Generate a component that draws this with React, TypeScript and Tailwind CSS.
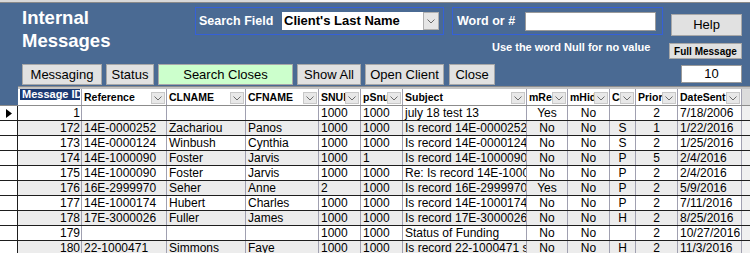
import React from 'react';

type Col = {
  label: string;
  w: string;
  align: 'left' | 'right' | 'center';
  arrow: boolean;
};

const COLS: Col[] = [
  { label: 'Message ID', w: 'w-[64px]', align: 'right', arrow: false },
  { label: 'Reference', w: 'w-[85px]', align: 'left', arrow: true },
  { label: 'CLNAME', w: 'w-[79px]', align: 'left', arrow: true },
  { label: 'CFNAME', w: 'w-[73px]', align: 'left', arrow: true },
  { label: 'SNUM', w: 'w-[42px]', align: 'left', arrow: true },
  { label: 'pSnum', w: 'w-[42px]', align: 'left', arrow: true },
  { label: 'Subject', w: 'w-[124px]', align: 'left', arrow: true },
  { label: 'mRead', w: 'w-[41px]', align: 'center', arrow: true },
  { label: 'mHidden', w: 'w-[42px]', align: 'center', arrow: true },
  { label: 'Cat', w: 'w-[26px]', align: 'center', arrow: true },
  { label: 'Priority', w: 'w-[42px]', align: 'center', arrow: true },
  { label: 'DateSent', w: 'w-[64px]', align: 'left', arrow: true },
];

const ROWS: string[][] = [
  ['1', '', '', '', '1000', '1000', 'july 18 test 13', 'Yes', 'No', '', '2', '7/18/2006'],
  ['172', '14E-0000252', 'Zachariou', 'Panos', '1000', '1000', 'Is record 14E-0000252', 'No', 'No', 'S', '1', '1/22/2016'],
  ['173', '14E-0000124', 'Winbush', 'Cynthia', '1000', '1000', 'Is record 14E-0000124', 'No', 'No', 'S', '2', '1/25/2016'],
  ['174', '14E-1000090', 'Foster', 'Jarvis', '1000', '1', 'Is record 14E-1000090', 'No', 'No', 'P', '5', '2/4/2016'],
  ['175', '14E-1000090', 'Foster', 'Jarvis', '1000', '1000', 'Re: Is record 14E-1000090', 'No', 'No', 'P', '2', '2/4/2016'],
  ['176', '16E-2999970', 'Seher', 'Anne', '2', '1000', 'Is record 16E-2999970', 'Yes', 'No', 'P', '2', '5/9/2016'],
  ['177', '14E-1000174', 'Hubert', 'Charles', '1000', '1000', 'Is record 14E-1000174', 'No', 'No', 'P', '2', '7/11/2016'],
  ['178', '17E-3000026', 'Fuller', 'James', '1000', '1000', 'Is record 17E-3000026', 'No', 'No', 'H', '2', '8/25/2016'],
  ['179', '', '', '', '1000', '1000', 'Status of Funding', 'No', 'No', '', '2', '10/27/2016'],
  ['180', '22-1000471', 'Simmons', 'Faye', '1000', '1000', 'Is record 22-1000471 status', 'No', 'No', 'H', '2', '11/3/2016'],
];

const alignClass = {
  left: 'justify-start pl-[2px]',
  right: 'justify-end pr-[1px]',
  center: 'justify-center',
};

function Chevron() {
  return (
    <svg width="8" height="5" viewBox="0 0 8 5">
      <polyline points="0.5,0.5 4,4 7.5,0.5" fill="none" stroke="#6b6b6b" strokeWidth="1" />
    </svg>
  );
}

function Btn({
  children,
  className = '',
  green = false,
}: {
  children: React.ReactNode;
  className?: string;
  green?: boolean;
}) {
  return (
    <div
      className={`flex h-[21px] items-center justify-center border border-[#a8a8a8] text-[13px] text-black ${green ? 'bg-[#ccffcc]' : 'bg-[#e1e1e1]'} ${className}`}
    >
      {children}
    </div>
  );
}

export default function App() {
  return (
    <div className="h-[253px] w-[750px] overflow-hidden bg-[#4a6a93] font-['Liberation_Sans',Arial,sans-serif]">
      {/* remnants of the tab strip */}
      <div className="flex h-[3px] border-b border-[#8a8a8a]">
        <div className="w-[300px] bg-[#d9d9d9]" />
        <div className="flex-1 bg-[#f7f7f7]" />
      </div>

      {/* header form */}
      <div className="flex h-[83px]">
        <div className="flex w-[669px] flex-col pl-[22px]">
          <div className="flex h-[61px]">
            <div className="w-[173px] pt-[3px] text-[18.5px] leading-[23px] font-bold text-white">
              Internal
              <br />
              Messages
            </div>
            <div className="flex flex-col">
              <div className="flex pt-[4px]">
                <div className="flex h-[28px] w-[249px] items-center justify-between border border-[#3560d8] pl-[3px] pr-[4px]">
                  <span className="text-[12.5px] font-bold text-white">Search Field</span>
                  <div className="flex h-[18px] w-[157px] items-center bg-white">
                    <span className="flex-1 pl-[2px] text-[13px] font-bold text-black">Client's Last Name</span>
                    <div className="flex h-full w-[16px] items-center justify-center border border-[#b0b0b0] bg-[#e6e6e6]">
                      <Chevron />
                    </div>
                  </div>
                </div>
                <div className="ml-[8px] flex h-[28px] w-[211px] items-center justify-between border border-[#3560d8] pl-[4px] pr-[6px]">
                  <span className="text-[12.5px] font-bold text-white">Word or #</span>
                  <div className="h-[19px] w-[131px] border border-[#9a9a9a] bg-white" />
                </div>
              </div>
              <p className="mt-[6px] pl-[297px] text-[11px] leading-[13px] font-bold whitespace-nowrap text-white">
                Use the word Null for no value
              </p>
            </div>
          </div>
          <div className="flex">
            <Btn className="w-[80px]">Messaging</Btn>
            <Btn className="ml-[4px] w-[48px]">Status</Btn>
            <Btn green className="ml-[4px] w-[135px]">
              Search Closes
            </Btn>
            <Btn className="ml-[4px] w-[64px]">Show All</Btn>
            <Btn className="ml-[4px] w-[79px]">Open Client</Btn>
            <Btn className="ml-[5px] w-[46px]">Close</Btn>
          </div>
        </div>
        <div className="flex flex-col">
          <Btn className="mt-[11px] ml-[2px] h-[22px] w-[71px]">Help</Btn>
          <div className="mt-[7px] flex h-[16px] w-[73px] items-center justify-center border border-[#a8a8a8] bg-[#e1e1e1] text-[10px] font-bold text-black">
            Full Message
          </div>
          <div className="mt-[6px] ml-[12px] flex h-[18px] w-[61px] items-center justify-center border border-[#9a9a9a] bg-white text-[13px] text-black">
            10
          </div>
        </div>
      </div>

      {/* datasheet */}
      <div className="flex h-[3px]">
        <div className="w-[18px]" />
        <div className="flex-1 border-t border-[#8c8c8c] bg-[#c4c4c4]" />
      </div>
      <div className="flex h-[17px] border-b border-[#8c8c8c]">
        <div className="w-[18px] shrink-0" />
        {COLS.map((c, i) => (
          <div
            key={c.label}
            className={`flex shrink-0 items-start overflow-hidden border-r border-[#a0a0b0] bg-white ${c.w}`}
          >
            {i === 0 ? (
              <span className="mr-[1px] ml-[2px] block h-[11px] flex-1 overflow-hidden bg-[#1b3a73] pl-[2px] text-[11px] leading-[11px] font-bold whitespace-nowrap text-white">
                {c.label}
              </span>
            ) : (
              <span className="min-w-0 flex-1 overflow-hidden pt-[2px] pl-[2px] text-[10.5px] leading-[13px] font-bold whitespace-nowrap text-black">
                {c.label}
              </span>
            )}
            {c.arrow && (
              <div className="mt-[3px] mr-[1px] flex h-[12px] w-[14px] shrink-0 items-center justify-center border border-[#c8c8c8] bg-[#e8e8e8]">
                <Chevron />
              </div>
            )}
          </div>
        ))}
        <div className="flex-1 bg-[#dcdcdc]" />
      </div>
      {ROWS.map((r, ri) => (
        <div key={ri} className="flex h-[15px] border-b border-[#1e1e1e]">
          <div className="flex w-[18px] shrink-0 items-center justify-center border-r border-[#1e1e1e] bg-white">
            {ri === 0 && (
              <svg width="6" height="9" viewBox="0 0 6 9">
                <polygon points="0,0 6,4.5 0,9" fill="#000" />
              </svg>
            )}
          </div>
          {COLS.map((c, ci) => (
            <div
              key={ci}
              className={`flex shrink-0 items-center overflow-hidden border-r border-[#a0a0b0] text-[12px] leading-[14px] whitespace-nowrap text-black ${c.w} ${alignClass[c.align]} ${ri % 2 === 1 ? 'bg-[#ececec]' : 'bg-white'}`}
            >
              {r[ci]}
            </div>
          ))}
          <div className="flex-1 bg-[#f0f0f0]" />
        </div>
      ))}
    </div>
  );
}
